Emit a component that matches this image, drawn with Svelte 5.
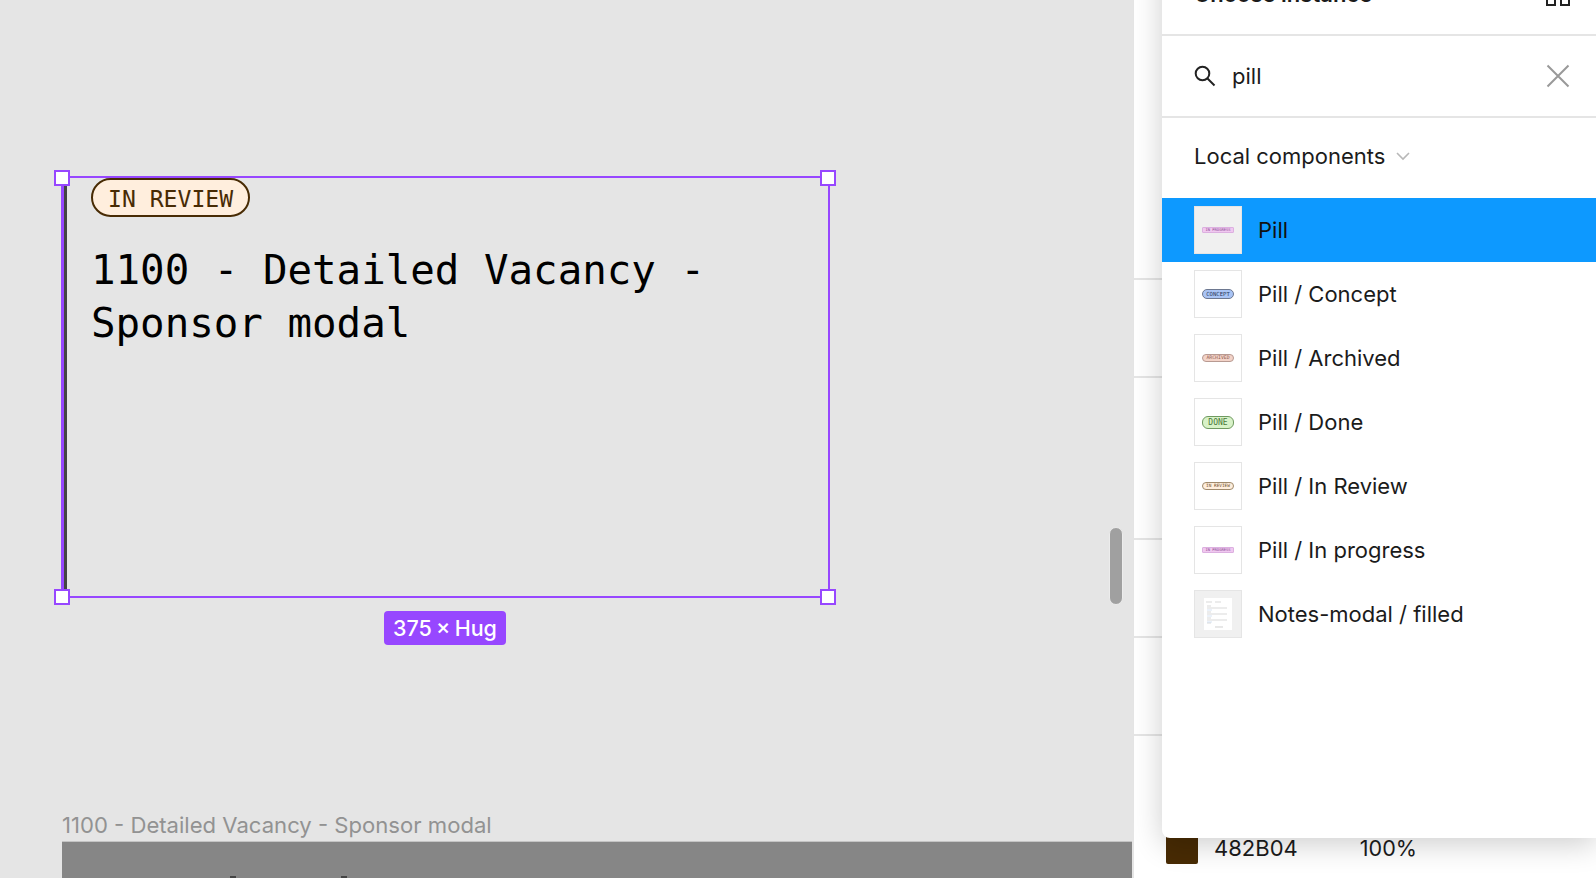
<script>
	const items = [
		{ name: 'Pill', kind: 'progress', active: true },
		{ name: 'Pill / Concept', kind: 'concept' },
		{ name: 'Pill / Archived', kind: 'archived' },
		{ name: 'Pill / Done', kind: 'done' },
		{ name: 'Pill / In Review', kind: 'review' },
		{ name: 'Pill / In progress', kind: 'progress' },
		{ name: 'Notes-modal / filled', kind: 'notes' }
	];

	const labels = {
		progress: 'IN PROGRESS',
		concept: 'CONCEPT',
		archived: 'ARCHIVED',
		done: 'DONE',
		review: 'IN REVIEW'
	};

	const separators = [278, 376, 538, 636, 734];
</script>

<div class="app">
	<div class="canvas">
		<div class="selection">
			<div class="frame">
				<span class="pill">IN REVIEW</span>
				<h1>1100 - Detailed Vacancy - Sponsor modal</h1>
			</div>
			<i class="handle tl"></i>
			<i class="handle tr"></i>
			<i class="handle bl"></i>
			<i class="handle br"></i>
			<span class="size">375 × Hug</span>
		</div>

		<div class="scrollbar"></div>

		<div class="next">
			<div class="next-title">1100 - Detailed Vacancy - Sponsor modal</div>
			<div class="next-frame">
				<i class="tick"></i>
				<i class="tick"></i>
			</div>
		</div>
	</div>

	<div class="panel">
		{#each separators as y}
			<div class="separator" style="top: {y}px"></div>
		{/each}

		<div class="fill">
			<div class="swatch"></div>
			<span class="hex">482B04</span>
			<span class="pct">100%</span>
		</div>

		<div class="popover">
			<div class="head">
				<span class="title">Choose instance</span>
				<svg width="24" height="24" viewBox="0 0 24 24" fill="none" stroke="#222" stroke-width="2">
					<rect x="1" y="1" width="8" height="8" />
					<rect x="15" y="1" width="8" height="8" />
					<rect x="1" y="15" width="8" height="8" />
					<rect x="15" y="15" width="8" height="8" />
				</svg>
			</div>

			<div class="search">
				<svg width="22" height="22" viewBox="0 0 22 22" fill="none" stroke="#222" stroke-width="2">
					<circle cx="8.5" cy="8.5" r="6.8" />
					<path d="M13.5 13.5 20.5 20.5" />
				</svg>
				<span class="query">pill</span>
				<svg class="clear" width="24" height="24" viewBox="0 0 24 24" fill="none" stroke="#999" stroke-width="2">
					<path d="M1.5 1.5 22.5 22.5M22.5 1.5 1.5 22.5" />
				</svg>
			</div>

			<div class="section">
				<span>Local components</span>
				<svg width="14" height="10" viewBox="0 0 14 10" fill="none" stroke="#b8b8b8" stroke-width="1.6">
					<path d="M1 2 7 8 13 2" />
				</svg>
			</div>

			<div class="list">
				{#each items as item}
					<div class="row" class:active={item.active}>
						<div class="thumb" class:grey={item.active || item.kind === 'notes'}>
							{#if item.kind === 'notes'}
								<svg width="28" height="32" viewBox="0 0 28 32">
									<rect width="28" height="32" fill="#fff" />
									<path d="M2 4h6M11 4h6M3 8h4M3 10h20M3 14h4M3 16h20M3 20h4M3 22h20M3 25h4" stroke="#c9c9c9" stroke-width=".7" />
									<path d="M3 12h5M3 18h5M3 24h5" stroke="#c6d8f0" stroke-width=".7" />
									<path d="M11 29h8" stroke="#bbb" stroke-width=".7" />
								</svg>
							{:else}
								<span class="mini {item.kind}">{labels[item.kind]}</span>
							{/if}
						</div>
						<span class="name">{item.name}</span>
					</div>
				{/each}
			</div>
		</div>
	</div>
</div>

<style>
	:global(body) {
		overflow: hidden;
		background: #e5e5e5;
	}

	.app {
		display: flex;
		height: 878px;
		overflow: hidden;
		font-family: Inter, 'Noto Sans', sans-serif;
		color: #1b1b1b;
	}

	.canvas {
		position: relative;
		width: 1134px;
		flex: none;
		background: #e5e5e5;
	}

	.selection {
		position: absolute;
		left: 62px;
		top: 176px;
		width: 768px;
		height: 422px;
		box-sizing: border-box;
		border: 2px solid #9747ff;
		box-shadow: -1px 0 0 #9747ff;
	}

	.frame {
		height: 100%;
		box-sizing: border-box;
		padding: 0 0 0 24px;
		border-left: 3px solid #444;
	}

	.pill {
		display: block;
		width: fit-content;
		box-sizing: border-box;
		height: 39px;
		line-height: 38px;
		padding: 0 15px;
		border: 2px solid #482b04;
		border-radius: 20px;
		background: #ffeedd;
		color: #482b04;
		font-family: 'DejaVu Sans Mono', monospace;
		font-size: 23.1px;
	}

	h1 {
		margin: 27px 0 0;
		width: 680px;
		font-family: 'DejaVu Sans Mono', monospace;
		font-weight: 400;
		font-size: 40.8px;
		line-height: 53.4px;
		color: #000;
	}

	.handle {
		position: absolute;
		width: 16px;
		height: 16px;
		box-sizing: border-box;
		border: 2px solid #9747ff;
		background: #fff;
	}

	.tl { left: -10px; top: -8px; }
	.tr { right: -8px; top: -8px; }
	.bl { left: -10px; bottom: -9px; }
	.br { right: -8px; bottom: -9px; }

	.size {
		position: absolute;
		left: 320px;
		top: 433px;
		padding: 0 9px;
		line-height: 34px;
		border-radius: 4px;
		background: #9747ff;
		color: #fff;
		font-size: 21.5px;
		font-weight: 500;
		word-spacing: -1.5px;
		white-space: nowrap;
	}

	.scrollbar {
		position: absolute;
		left: 1109px;
		top: 527px;
		width: 14px;
		height: 78px;
		box-sizing: border-box;
		border: 1px solid #ececec;
		border-radius: 7px;
		background: #a0a0a0;
	}

	.next {
		position: absolute;
		left: 62px;
		right: 2px;
		top: 811px;
	}

	.next-title {
		font-size: 22.1px;
		line-height: 28px;
		height: 30px;
		color: #929292;
	}

	.next-frame {
		display: flex;
		gap: 105px;
		height: 40px;
		padding-left: 168px;
		border-top: 1px solid #c4c4c4;
		background: #868686;
	}

	.tick {
		width: 6px;
		height: 2px;
		margin-top: 34px;
		background: #444;
	}

	.panel {
		position: relative;
		flex: 1;
		background: #fff;
	}

	.separator {
		position: absolute;
		left: 0;
		width: 40px;
		height: 2px;
		background: #e5e5e5;
	}

	.fill {
		position: absolute;
		left: 32px;
		top: 831px;
		display: flex;
		align-items: center;
		font-size: 22px;
		width: 300px;
	}

	.swatch {
		width: 32px;
		height: 33px;
		border-radius: 2px;
		background: #482b04;
	}

	.hex {
		margin: 0 62px 0 16px;
	}

	.pct {
		font-size: 21.6px;
	}

	.popover {
		position: absolute;
		left: 28px;
		right: 0;
		top: -46px;
		height: 884px;
		border-radius: 0 0 0 8px;
		background: #fff;
		box-shadow: 0 6px 30px rgba(0, 0, 0, 0.2);
	}

	.head {
		display: flex;
		align-items: center;
		justify-content: space-between;
		height: 80px;
		padding: 0 26px 0 32px;
		border-bottom: 2px solid #e5e5e5;
	}

	.title {
		font-size: 22px;
		font-weight: 600;
	}

	.search {
		display: flex;
		align-items: center;
		height: 80px;
		padding: 0 26px 0 32px;
		border-bottom: 2px solid #e5e5e5;
	}

	.query {
		margin-left: 16px;
		font-size: 22px;
	}

	.clear {
		margin-left: auto;
	}

	.section {
		display: flex;
		align-items: center;
		gap: 11px;
		height: 80px;
		box-sizing: border-box;
		padding: 0 0 5px 32px;
		font-size: 22px;
	}

	.row {
		display: flex;
		align-items: center;
		gap: 16px;
		height: 64px;
		padding-left: 32px;
		font-size: 22px;
	}

	.row.active {
		background: #0d99ff;
		color: #111;
	}

	.thumb {
		display: flex;
		align-items: center;
		justify-content: center;
		width: 48px;
		height: 48px;
		box-sizing: border-box;
		border: 1px solid #e5e5e5;
		background: #fff;
	}

	.thumb.grey {
		background: #f0f0f0;
	}

	.mini {
		display: block;
		box-sizing: border-box;
		width: 32px;
		text-align: center;
		font-family: 'DejaVu Sans Mono', monospace;
		border: 1px solid;
		overflow: hidden;
		white-space: nowrap;
	}

	.progress {
		background: #f0c8f0;
		border-color: #dcb0e0;
		color: #8a4a90;
		border-radius: 1px;
		font-size: 3.8px;
		line-height: 4px;
	}

	.concept {
		background: #a9c4f5;
		border-color: #6d7890;
		color: #2c3b5c;
		font-size: 5.6px;
		line-height: 8px;
		border-radius: 5px;
	}

	.archived {
		background: #f3d3c8;
		border-color: #b89a92;
		color: #906050;
		font-size: 4.8px;
		line-height: 6px;
		border-radius: 4px;
	}

	.done {
		background: #d8f2c8;
		border-color: #6f9a60;
		color: #4a7a3a;
		font-size: 8px;
		line-height: 11px;
		border-radius: 6px;
	}

	.review {
		background: #ffeedd;
		border-color: #a08a6c;
		color: #6a4a24;
		font-size: 4.4px;
		line-height: 6px;
		border-radius: 4px;
	}
</style>
